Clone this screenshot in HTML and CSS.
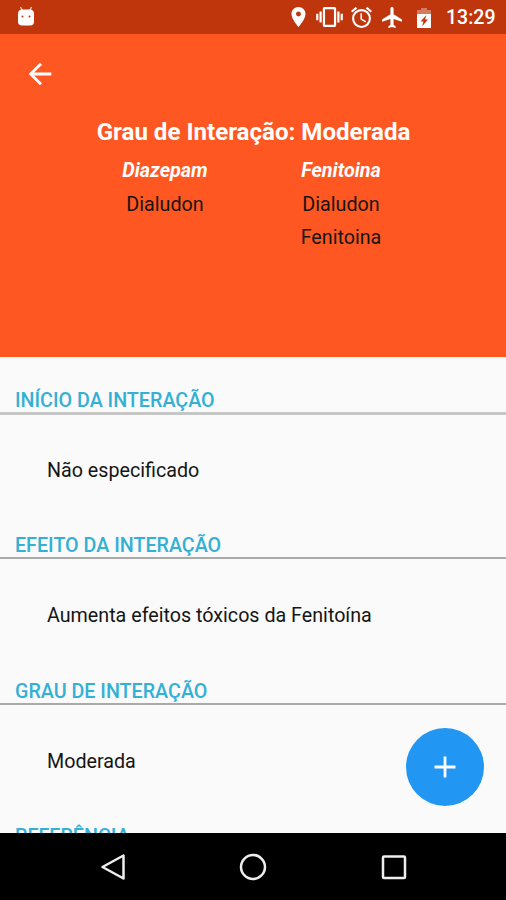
FILE: index.html
```html
<!DOCTYPE html>
<html lang="pt-BR">
<head>
    <meta charset="UTF-8">
    <meta name="viewport" content="width=device-width, initial-scale=1.0">
    <title>Grau de Interação</title>
    <link rel="stylesheet" href="styles.css">
</head>
<body>
    <div class="status-bar">
        <svg class="debug-icon" viewBox="0 0 18 20">
            <path d="M3.5 1L5.5 5M14.5 1L12.5 5" stroke="#fff" stroke-opacity=".8" stroke-width="1.3"/>
            <path d="M4 3.5h10q3 1 3 4v8q0 4-4 4H5q-4 0-4-4v-8q0-3 3-4z" fill="#fff"/>
            <circle cx="5.5" cy="10.5" r="1" fill="#bf360c"/>
            <circle cx="12.5" cy="10.5" r="1" fill="#bf360c"/>
        </svg>
        <div class="status-icons">
            <svg class="pin" viewBox="5 2 14 20"><path d="M12 2C8.13 2 5 5.13 5 9c0 5.25 7 13 7 13s7-7.75 7-13c0-3.87-3.13-7-7-7zm0 9.5a2.5 2.5 0 0 1 0-5 2.5 2.5 0 0 1 0 5z"/></svg>
            <svg class="vibrate" viewBox="0 3 24 18"><path d="M0 15h2V9H0v6zm3 2h2V7H3v10zm19-8v6h2V9h-2zm-3 8h2V7h-2v10zM16.5 3h-9C6.67 3 6 3.67 6 4.5v15c0 .83.67 1.5 1.5 1.5h9c.83 0 1.5-.67 1.5-1.5v-15c0-.83-.67-1.5-1.5-1.5zM16 19H8V5h8v14z"/></svg>
            <svg class="alarm" viewBox="2 2 20 20"><path d="M22 5.72l-4.6-3.86-1.29 1.53 4.6 3.86L22 5.72zM7.88 3.39L6.6 1.86 2 5.71l1.29 1.53 4.59-3.85zM12.5 8H11v6l4.75 2.85.75-1.23-4-2.37V8zM12 4a9 9 0 1 0 0 18 9 9 0 0 0 0-18zm0 16a7 7 0 1 1 0-14 7 7 0 0 1 0 14z"/></svg>
            <svg class="plane" viewBox="2 2 19 20"><path d="M21 16v-2l-8-5V3.5c0-.83-.67-1.5-1.5-1.5S10 2.67 10 3.5V9l-8 5v2l8-2.500V19l-2 1.5V22l3.5-1 3.5 1v-1.5L13 19v-5.5l8 2.5z"/></svg>
            <svg class="battery" viewBox="0 0 14 20">
                <path d="M4 0h6v2h4v4H0V2h4z" fill-opacity=".35"/>
                <path d="M0 6h14v14H0zM9.5 7L3.5 13.5H6.5L5 18.5L11 11.5H8z" fill-rule="evenodd"/>
            </svg>
        </div>
        <span class="clock">13:29</span>
    </div>

    <header class="header">
        <svg class="back" viewBox="0 0 24 24"><path d="M20 11H7.83l5.59-5.59L12 4l-8 8 8 8 1.41-1.41L7.83 13H20v-2z"/></svg>
        <h1>Grau de Interação: Moderada</h1>
        <div class="drugs">
            <div class="drug">
                <h2>Diazepam</h2>
                <p>Dialudon</p>
            </div>
            <div class="drug">
                <h2>Fenitoina</h2>
                <p>Dialudon</p>
                <p>Fenitoina</p>
            </div>
        </div>
    </header>

    <main class="content">
        <section>
            <h3>INÍCIO DA INTERAÇÃO</h3>
            <p>Não especificado</p>
        </section>
        <section>
            <h3>EFEITO DA INTERAÇÃO</h3>
            <p>Aumenta efeitos tóxicos da Fenitoína</p>
        </section>
        <section>
            <h3>GRAU DE INTERAÇÃO</h3>
            <p>Moderada</p>
        </section>
        <section>
            <h3>REFERÊNCIA</h3>
        </section>
    </main>

    <button class="fab" aria-label="Adicionar">
        <svg viewBox="0 0 22 22"><path d="M11 .5v21M.5 11h21"/></svg>
    </button>

    <nav class="nav-bar">
        <svg viewBox="0 0 28 28"><path d="M24.5 2.5v23L3.5 14z"/></svg>
        <svg viewBox="0 0 28 28"><circle cx="14" cy="14" r="12"/></svg>
        <svg viewBox="0 0 28 28"><rect x="3" y="3.5" width="22" height="21.5" rx="1"/></svg>
    </nav>
</body>
</html>
```
FILE: styles.css
```css
* {
    box-sizing: border-box;
}

body {
    margin: 0;
    height: 900px;
    display: flex;
    flex-direction: column;
    overflow: hidden;
    position: relative;
    font-family: Roboto, sans-serif;
    font-size: 19.7px;
    background-color: #fafafa;
    color: #151515;
}

h1, h2, h3, p {
    margin: 0;
}

svg {
    display: block;
    flex: none;
}

/* Status bar */
.status-bar {
    height: 34px;
    flex: none;
    display: flex;
    align-items: center;
    padding: 0 11px 0 17px;
    background-color: #bf360c;
    color: white;
}

.debug-icon {
    width: 18px;
    height: 20px;
    margin-top: -2px;
}

.status-icons {
    display: flex;
    align-items: center;
    margin-left: auto;
    fill: white;
}

.pin {
    width: 15px;
    height: 20px;
    margin-right: 10px;
}

.vibrate {
    width: 27px;
    height: 20px;
    margin-right: 8px;
}

.alarm {
    width: 21px;
    height: 21px;
    margin-right: 10px;
}

.plane {
    width: 20px;
    height: 21px;
    margin-right: 15px;
}

.battery {
    width: 14px;
    height: 20px;
    margin-right: 15px;
    margin-top: 2px;
}

.clock {
    width: 49px;
    margin-top: 1px;
    font-size: 19.5px;
    font-weight: 500;
    white-space: nowrap;
}

/* Orange header */
.header {
    height: 323px;
    flex: none;
    padding-top: 23px;
    background-color: #ff5722;
    text-align: center;
}

.back {
    width: 34px;
    height: 34px;
    margin-left: 23px;
    fill: white;
}

.header h1 {
    margin-top: 26px;
    padding-left: 1px;
    font-size: 24.1px;
    line-height: 30px;
    font-weight: 700;
    color: white;
}

.drugs {
    display: flex;
    justify-content: center;
    margin-top: 7px;
}

.drug {
    width: 176px;
    line-height: 33.5px;
}

.drug h2 {
    font-size: 19.8px;
    font-style: italic;
    font-weight: 700;
    color: white;
}

/* Details */
.content {
    flex: 1;
    min-height: 0;
    overflow: hidden;
    padding-top: 30px;
}

.content section {
    height: 145.4px;
}

.content h3 {
    height: 27px;
    padding-left: 15px;
    border-bottom: 2px solid #aaa;
    font-size: 19.7px;
    line-height: 28px;
    font-weight: 500;
    color: #33b0d5;
}

.content section:first-child h3 {
    border-bottom: 3px solid #c6c6c6;
    height: 28px;
    margin-bottom: -1px;
}

.content p {
    padding: 43px 47px 0;
    line-height: 28px;
}

/* Floating button */
.fab {
    position: absolute;
    right: 22px;
    bottom: 94px;
    width: 78px;
    height: 78px;
    padding: 0;
    display: flex;
    align-items: center;
    justify-content: center;
    border: none;
    border-radius: 50%;
    background-color: #2196f3;
}

.fab svg {
    width: 22px;
    height: 22px;
    stroke: white;
    stroke-width: 2.8;
}

/* Navigation bar */
.nav-bar {
    height: 67px;
    flex: none;
    display: flex;
    justify-content: center;
    align-items: center;
    gap: 112.5px;
    background-color: black;
}

.nav-bar svg {
    width: 28px;
    height: 28px;
    fill: none;
    stroke: #eee;
    stroke-width: 2.5;
    stroke-linejoin: round;
}
```
